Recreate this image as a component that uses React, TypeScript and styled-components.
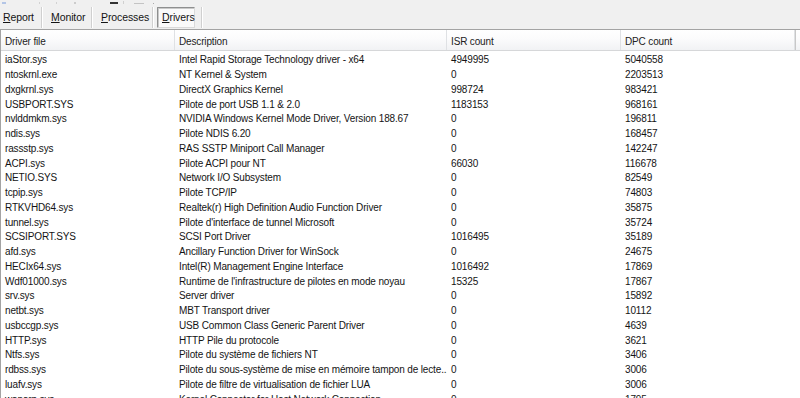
import styled, { createGlobalStyle } from 'styled-components';

const GlobalStyle = createGlobalStyle`
  html, body {
    margin: 0;
    padding: 0;
    background: #f0f0f0;
    overflow: hidden;
  }
  body {
    font-family: "Liberation Sans", Arial, sans-serif;
    font-size: 10px;
    letter-spacing: -0.15px;
    color: #141414;
  }
`;

const Window = styled.div`
  width: 800px;
  height: 398px;
  display: flex;
  flex-direction: column;
  overflow: hidden;
`;

const IconStrip = styled.div`
  height: 4px;
  overflow: hidden;
  display: flex;
  align-items: flex-end;
`;

const Stub = styled.span<{ $left: number; $w: number; $h: number; $color: string }>`
  display: block;
  flex: none;
  margin-left: ${(p) => p.$left}px;
  width: ${(p) => p.$w}px;
  height: ${(p) => p.$h}px;
  background: ${(p) => p.$color};
`;

const TabBar = styled.div`
  height: 25px;
  display: flex;
  align-items: center;
  padding-left: 2px;
`;

const Tab = styled.button<{ $active?: boolean; $width: number }>`
  width: ${(p) => p.$width}px;
  height: 21px;
  margin-top: 1px;
  padding: 0 0 0 ${(p) => (p.$active ? 4 : 0)}px;
  text-align: left;
  font: inherit;
  font-size: 10.5px;
  letter-spacing: -0.1px;
  color: #141414;
  background: ${(p) => (p.$active ? '#fafafa' : 'transparent')};
  border: 1px solid ${(p) => (p.$active ? '#8e8f8f' : 'transparent')};
  border-right-color: ${(p) => (p.$active ? '#dadada' : 'transparent')};
  border-bottom-color: ${(p) => (p.$active ? '#dadada' : 'transparent')};
  box-shadow: ${(p) => (p.$active ? 'inset 1px 1px 0 #c9c9c9' : 'none')};
  border-radius: 1px;
  flex: none;

  u {
    text-decoration: underline;
    text-underline-offset: 1px;
  }
`;

const Separator = styled.span<{ $before?: number; $after?: number }>`
  width: 1px;
  height: 21px;
  margin: 1px ${(p) => p.$after ?? 0}px 0 ${(p) => p.$before ?? 0}px;
  background: #d0d0d0;
  box-shadow: 1px 0 0 #fff;
  flex: none;
`;

const List = styled.div`
  flex: 1;
  background: #fff;
  border-top: 1px solid #a3a3a3;
  border-left: 1px solid #a3a3a3;
  display: flex;
  flex-direction: column;
  overflow: hidden;
`;

const columns = '174px 272px 174px 174px 1fr';

const Header = styled.div`
  height: 20px;
  display: grid;
  grid-template-columns: ${columns};
  background: linear-gradient(#ffffff 0%, #fbfbfc 45%, #f1f2f4 100%);
  border-bottom: 1px solid #d6d7d9;
  flex: none;
`;

const HeaderCell = styled.div`
  display: flex;
  align-items: center;
  padding: 2px 0 0 4px;
  color: #222;
  border-right: 1px solid #dfe1e4;
  white-space: nowrap;
  overflow: hidden;

  &:last-child {
    border-right: none;
    border-left: 1px solid #c8c8c8;
  }
`;

const Rows = styled.div`
  padding-top: 2px;
`;

const Row = styled.div`
  height: 14.75px;
  display: grid;
  grid-template-columns: ${columns};
  align-items: center;
`;

const Cell = styled.div`
  padding-left: 4px;
  white-space: nowrap;
  overflow: hidden;
  line-height: 14px;
`;

type Driver = [string, string, string, string];

const drivers: Driver[] = [
  ['iaStor.sys', 'Intel Rapid Storage Technology driver - x64', '4949995', '5040558'],
  ['ntoskrnl.exe', 'NT Kernel & System', '0', '2203513'],
  ['dxgkrnl.sys', 'DirectX Graphics Kernel', '998724', '983421'],
  ['USBPORT.SYS', 'Pilote de port USB 1.1 & 2.0', '1183153', '968161'],
  ['nvlddmkm.sys', 'NVIDIA Windows Kernel Mode Driver, Version 188.67', '0', '196811'],
  ['ndis.sys', 'Pilote NDIS 6.20', '0', '168457'],
  ['rassstp.sys', 'RAS SSTP Miniport Call Manager', '0', '142247'],
  ['ACPI.sys', 'Pilote ACPI pour NT', '66030', '116678'],
  ['NETIO.SYS', 'Network I/O Subsystem', '0', '82549'],
  ['tcpip.sys', 'Pilote TCP/IP', '0', '74803'],
  ['RTKVHD64.sys', 'Realtek(r) High Definition Audio Function Driver', '0', '35875'],
  ['tunnel.sys', "Pilote d'interface de tunnel Microsoft", '0', '35724'],
  ['SCSIPORT.SYS', 'SCSI Port Driver', '1016495', '35189'],
  ['afd.sys', 'Ancillary Function Driver for WinSock', '0', '24675'],
  ['HECIx64.sys', 'Intel(R) Management Engine Interface', '1016492', '17869'],
  ['Wdf01000.sys', "Runtime de l'infrastructure de pilotes en mode noyau", '15325', '17867'],
  ['srv.sys', 'Server driver', '0', '15892'],
  ['netbt.sys', 'MBT Transport driver', '0', '10112'],
  ['usbccgp.sys', 'USB Common Class Generic Parent Driver', '0', '4639'],
  ['HTTP.sys', 'HTTP Pile du protocole', '0', '3621'],
  ['Ntfs.sys', 'Pilote du système de fichiers NT', '0', '3406'],
  ['rdbss.sys', 'Pilote du sous-système de mise en mémoire tampon de lecte...', '0', '3006'],
  ['luafv.sys', 'Pilote de filtre de virtualisation de fichier LUA', '0', '3006'],
  ['wanarp.sys', 'Kernel Connector for Host Network Connection', '0', '1795'],
];

const App = () => {
  return (
    <Window>
      <GlobalStyle />
      <IconStrip>
        <Stub $left={2} $w={4} $h={2} $color="#b3c5e6" />
        <Stub $left={33} $w={1} $h={2} $color="#d2d2d2" />
        <Stub $left={16} $w={1} $h={2} $color="#d2d2d2" />
        <Stub $left={17} $w={2} $h={2} $color="#cccccc" />
        <Stub $left={34} $w={8} $h={2} $color="#333" />
        <Stub $left={5} $w={1} $h={3} $color="#d0d0d0" />
        <Stub $left={10} $w={10} $h={1} $color="#c4c4c4" />
        <Stub $left={9} $w={1} $h={1} $color="#aaa" />
      </IconStrip>
      <TabBar>
        <Tab $width={39}><u>R</u>eport</Tab>
        <Separator $after={8} />
        <Tab $width={41}><u>M</u>onitor</Tab>
        <Separator $after={8} />
        <Tab $width={52}><u>P</u>rocesses</Tab>
        <Separator $after={4} />
        <Tab $active $width={38}><u>D</u>rivers</Tab>
        <Separator $before={6} />
      </TabBar>
      <List>
        <Header>
          <HeaderCell>Driver file</HeaderCell>
          <HeaderCell>Description</HeaderCell>
          <HeaderCell>ISR count</HeaderCell>
          <HeaderCell>DPC count</HeaderCell>
          <HeaderCell />
        </Header>
        <Rows>
          {drivers.map(([file, desc, isr, dpc]) => (
            <Row key={file}>
              <Cell>{file}</Cell>
              <Cell>{desc}</Cell>
              <Cell>{isr}</Cell>
              <Cell>{dpc}</Cell>
              <Cell />
            </Row>
          ))}
        </Rows>
      </List>
    </Window>
  );
};

export default App;
